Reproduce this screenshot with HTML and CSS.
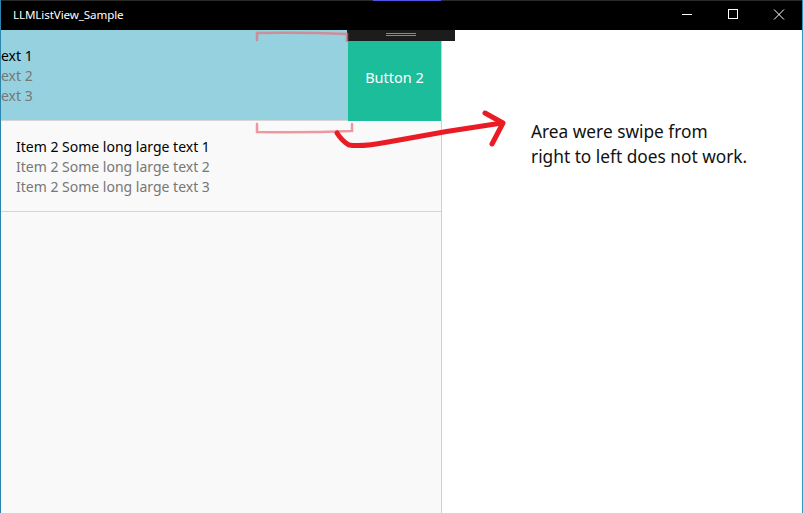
FILE: index.html
```html
<!DOCTYPE html>
<html lang="en">
<head>
<meta charset="utf-8">
<title>LLMListView_Sample</title>
<link rel="stylesheet" href="styles.css">
</head>
<body>
<div class="window">
  <div class="topline"><span class="accent"></span></div>
  <header class="titlebar">
    <div class="title">LLMListView_Sample</div>
    <div class="controls">
      <div class="ctl"><svg width="12" height="12" viewBox="0 0 12 12"><path d="M1 5.5 H11" stroke="#fff" stroke-width="1" fill="none"/></svg></div>
      <div class="ctl"><svg width="12" height="12" viewBox="0 0 12 12"><rect x="1.5" y="0.5" width="9" height="9" stroke="#fff" stroke-width="1" fill="none"/></svg></div>
      <div class="ctl"><svg width="12" height="12" viewBox="0 0 12 12"><path d="M1 0.5 L11 10.5 M11 0.5 L1 10.5" stroke="#fff" stroke-width="1" fill="none"/></svg></div>
    </div>
  </header>
  <main class="content">
    <section class="list">
      <div class="item swiped">
        <div class="item-body">
          <div class="line primary">ext 1</div>
          <div class="line secondary">ext 2</div>
          <div class="line secondary">ext 3</div>
        </div>
        <div class="swipe-button">Button 2</div>
      </div>
      <div class="item">
        <div class="item-body padded">
          <div class="line primary">Item 2 Some long large text 1</div>
          <div class="line secondary">Item 2 Some long large text 2</div>
          <div class="line secondary">Item 2 Some long large text 3</div>
        </div>
      </div>
      <div class="handle"><span></span><span></span></div>
    </section>
    <section class="notes">
      <p class="note">Area were swipe from<br>right to left does not work.</p>
    </section>
    <svg class="marks" width="803" height="483" viewBox="0 30 803 483">
      <g class="bracket">
        <path d="M257 40 L257 33 Q300 32 347 34 L347 41"/>
        <path d="M257 124 L257 132 Q305 133 352 131 L352 124"/>
      </g>
      <g class="arrow">
        <path d="M337 133 Q342 141 349 145 Q362 147 388 142 Q445 131 502 123"/>
        <path d="M485 113 L503 123 L492 144"/>
      </g>
    </svg>
  </main>
</div>
</body>
</html>
```
FILE: styles.css
```css
* { box-sizing: border-box; }
html, body { margin: 0; padding: 0; }
body {
  width: 803px;
  height: 513px;
  overflow: hidden;
  background: #fff;
  font-family: "Noto Sans", "Open Sans", "DejaVu Sans", sans-serif;
}
.window {
  position: relative;
  width: 803px;
  height: 513px;
  display: flex;
  flex-direction: column;
  border-left: 1px solid #2a86ad;
  border-right: 1px solid #2a9ab8;
}
.topline {
  height: 1px;
  background: #2b2b2b;
  display: flex;
}
.accent {
  margin-left: 372px;
  width: 68px;
  height: 1px;
  background: #4f54e6;
}
.titlebar {
  height: 29px;
  background: #000;
  display: flex;
  align-items: center;
  justify-content: space-between;
}
.title {
  color: #fff;
  font-size: 11.6px;
  padding-left: 12px;
  padding-bottom: 2px;
  letter-spacing: -0.1px;
}
.controls {
  display: flex;
  height: 100%;
}
.ctl {
  width: 46px;
  height: 100%;
  display: flex;
  align-items: center;
  justify-content: center;
  padding-bottom: 2px;
}
.ctl svg { display: block; }
.content {
  position: relative;
  flex: 1;
  display: flex;
}
.list {
  position: relative;
  width: 441px;
  background: #f9f9f9;
  border-right: 1px solid #cfcfcf;
}
.item {
  display: flex;
  height: 91px;
  border-bottom: 1px solid #d6d6d6;
}
.item.swiped {
  background: #95d1df;
}
.item-body {
  flex: 1;
  padding-top: 16px;
  overflow: hidden;
}
.item-body.padded {
  padding-left: 15px;
  padding-top: 16px;
}
.line {
  font-size: 14px;
  line-height: 20px;
  white-space: nowrap;
}
.primary { color: #000; }
.secondary { color: #777; }
.swipe-button {
  width: 93px;
  background: #1bbd9b;
  color: #fff;
  font-size: 14.5px;
  display: flex;
  align-items: center;
  justify-content: center;
  padding-top: 2px;
  margin-bottom: -1px;
}
.handle {
  position: absolute;
  left: 346px;
  top: 0;
  width: 108px;
  height: 11px;
  background: #1c1c1c;
  display: flex;
  flex-direction: column;
  align-items: center;
  padding-top: 3px;
  gap: 1px;
}
.handle span {
  width: 30px;
  height: 1px;
  background: #8a8a8a;
}
.notes {
  flex: 1;
  padding: 89px 0 0 89px;
}
.note {
  margin: 0;
  font-size: 17.3px;
  line-height: 25px;
  color: #111;
}
.marks {
  position: absolute;
  left: -1px;
  top: 0;
  pointer-events: none;
}
.bracket path {
  fill: none;
  stroke: #e8707c;
  stroke-width: 2.5;
  stroke-linecap: round;
  opacity: 0.7;
  filter: blur(0.7px);
}
.arrow path {
  fill: none;
  stroke: #e91c26;
  stroke-width: 5;
  stroke-linecap: round;
  stroke-linejoin: round;
}
```
